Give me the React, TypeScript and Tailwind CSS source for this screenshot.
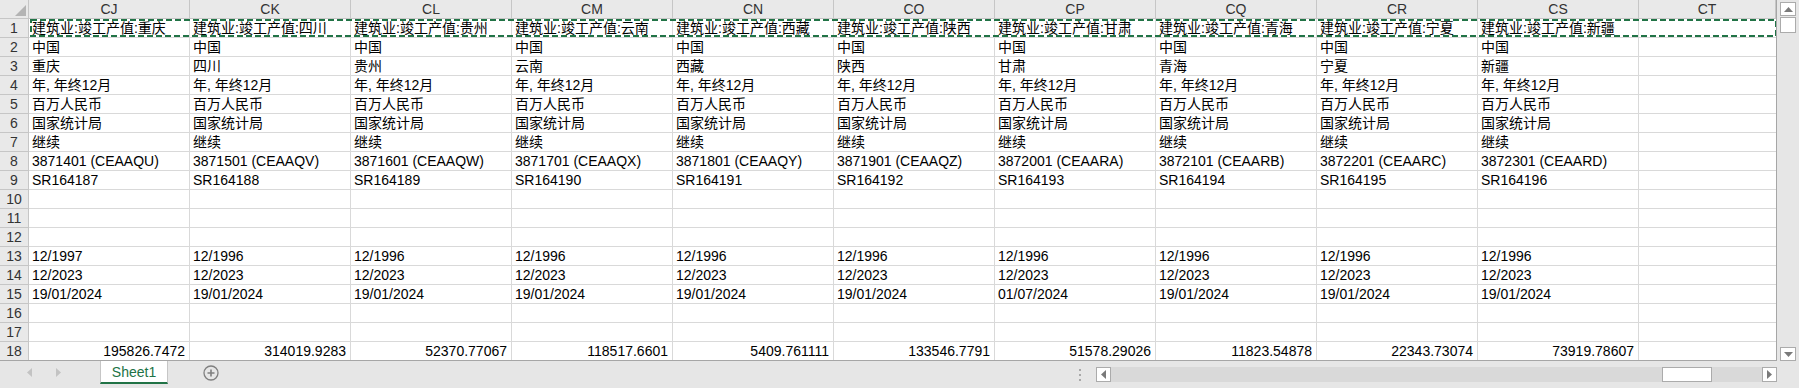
import React from 'react';

const cols = ['CJ', 'CK', 'CL', 'CM', 'CN', 'CO', 'CP', 'CQ', 'CR', 'CS'];
const regions = ['重庆', '四川', '贵州', '云南', '西藏', '陕西', '甘肃', '青海', '宁夏', '新疆'];
const codes = ['CEAAQU', 'CEAAQV', 'CEAAQW', 'CEAAQX', 'CEAAQY', 'CEAAQZ', 'CEAARA', 'CEAARB', 'CEAARC', 'CEAARD'];
const values = [
  '195826.7472',
  '314019.9283',
  '52370.77067',
  '118517.6601',
  '5409.761111',
  '133546.7791',
  '51578.29026',
  '11823.54878',
  '22343.73074',
  '73919.78607',
];

// one entry per column, 18 rows each
const columns = regions.map((region, i) => [
  `建筑业:竣工产值:${region}`,
  '中国',
  region,
  '年, 年终12月',
  '百万人民币',
  '国家统计局',
  '继续',
  `${3871401 + i * 100} (${codes[i]})`,
  `SR${164187 + i}`,
  '',
  '',
  '',
  i === 0 ? '12/1997' : '12/1996',
  '12/2023',
  i === 6 ? '01/07/2024' : '19/01/2024',
  '',
  '',
  values[i],
]);

const font = { fontFamily: '"Liberation Sans", "Noto Sans CJK SC", sans-serif' };

const ArrowUp = () => (
  <svg width="9" height="5" viewBox="0 0 9 5">
    <path d="M0 5 L4.5 0 L9 5 Z" fill="#7a7a7a" />
  </svg>
);

const ArrowDown = () => (
  <svg width="9" height="5" viewBox="0 0 9 5">
    <path d="M0 0 L4.5 5 L9 0 Z" fill="#7a7a7a" />
  </svg>
);

const ArrowLeft = ({ color = '#7a7a7a' }: { color?: string }) => (
  <svg width="5" height="9" viewBox="0 0 5 9">
    <path d="M5 0 L0 4.5 L5 9 Z" fill={color} />
  </svg>
);

const ArrowRight = ({ color = '#7a7a7a' }: { color?: string }) => (
  <svg width="5" height="9" viewBox="0 0 5 9">
    <path d="M0 0 L5 4.5 L0 9 Z" fill={color} />
  </svg>
);

export default function App() {
  return (
    <div className="w-[1799px] h-[388px] bg-white overflow-hidden text-[14px] text-black" style={font}>
      <div className="flex h-[361px]">
        {/* sheet grid */}
        <div className="relative w-[1777px] border-r border-b border-[#a6a6a6] overflow-hidden">
          <div className="grid grid-cols-[29px_repeat(10,161px)_137px]">
            {/* corner */}
            <div className="h-[19px] bg-[#e9e9e9] border-r border-b border-[#c6c6c6] flex items-end justify-end pr-[2px] pb-[2px]">
              <svg width="11" height="11" viewBox="0 0 11 11">
                <path d="M11 0 L11 11 L0 11 Z" fill="#b4b4b4" />
              </svg>
            </div>
            {cols.concat(['CT']).map((c) => (
              <div
                key={c}
                className="h-[19px] bg-[#e9e9e9] border-r border-b border-[#c6c6c6] flex items-center justify-center leading-none text-[#333]"
              >
                {c}
              </div>
            ))}

            {Array.from({ length: 18 }).map((_, r) => (
              <React.Fragment key={r}>
                <div className="h-[19px] bg-[#e9e9e9] border-r border-b border-[#c6c6c6] flex items-center justify-center leading-none text-[#333]">
                  {r + 1}
                </div>
                {columns.map((col, c) => (
                  <div
                    key={c}
                    className={
                      r === 17
                        ? 'h-[19px] border-r border-b border-[#d9d9d9] flex items-center justify-end pr-[4px] leading-none whitespace-nowrap overflow-hidden'
                        : 'h-[19px] border-r border-b border-[#d9d9d9] flex items-center pl-[3px] leading-none whitespace-nowrap overflow-hidden'
                    }
                  >
                    {col[r]}
                  </div>
                ))}
                <div className="h-[19px] border-b border-[#d9d9d9]" />
              </React.Fragment>
            ))}
          </div>

          {/* copy selection around row 1 */}
          <svg className="absolute left-0 top-0 pointer-events-none" width="1777" height="40">
            <rect
              x="31"
              y="20"
              width="1745"
              height="16"
              fill="none"
              stroke="#217346"
              strokeWidth="2"
              strokeDasharray="6 3"
            />
          </svg>
        </div>

        {/* vertical scrollbar */}
        <div className="w-[22px] bg-[#e6e6e6] flex flex-col items-center pt-[2px]">
          <div className="w-[16px] h-[14px] bg-white border border-[#ababab] flex items-center justify-center">
            <ArrowUp />
          </div>
          <div className="w-[16px] h-[16px] mt-[1px] bg-white border border-[#ababab]" />
          <div className="flex-1" />
          <div className="w-[16px] h-[14px] bg-white border border-[#ababab] flex items-center justify-center mb-[0px]">
            <ArrowDown />
          </div>
        </div>
      </div>

      {/* sheet tabs and horizontal scrollbar */}
      <div className="flex h-[27px] bg-[#e6e6e6] items-start">
        <div className="w-[100px] h-[23px] flex items-center pl-[27px] gap-[24px]">
          <ArrowLeft color="#c3c3c3" />
          <ArrowRight color="#c3c3c3" />
        </div>
        <div className="w-[68px] h-[23px] bg-white border-l border-r border-[#c6c6c6] border-b-2 border-b-[#217346] flex items-center justify-center text-[#217346] text-[14px] leading-none">
          Sheet1
        </div>
        <div className="ml-[35px] h-[23px] flex items-center">
          <svg width="16" height="16" viewBox="0 0 16 16">
            <circle cx="8" cy="8" r="7" fill="none" stroke="#7f7f7f" strokeWidth="1.3" />
            <path d="M8 4.5 V11.5 M4.5 8 H11.5" stroke="#7f7f7f" strokeWidth="1.6" />
          </svg>
        </div>
        <div className="flex-1" />
        <div className="h-[23px] flex flex-col justify-center gap-[3px] mr-[15px] pt-[4px]">
          <div className="w-[2px] h-[2px] bg-[#a8a8a8]" />
          <div className="w-[2px] h-[2px] bg-[#a8a8a8]" />
          <div className="w-[2px] h-[2px] bg-[#a8a8a8]" />
        </div>
        <div className="w-[681px] h-[15px] mt-[6px] bg-[#d9d9d9] flex items-stretch">
          <div className="w-[15px] bg-white border border-[#ababab] flex items-center justify-center">
            <ArrowLeft />
          </div>
          <div className="flex-1 flex items-stretch">
            <div className="ml-[551px] w-[50px] bg-white border border-[#ababab]" />
          </div>
          <div className="w-[15px] bg-white border border-[#ababab] flex items-center justify-center">
            <ArrowRight />
          </div>
        </div>
        <div className="w-[22px]" />
      </div>
    </div>
  );
}
